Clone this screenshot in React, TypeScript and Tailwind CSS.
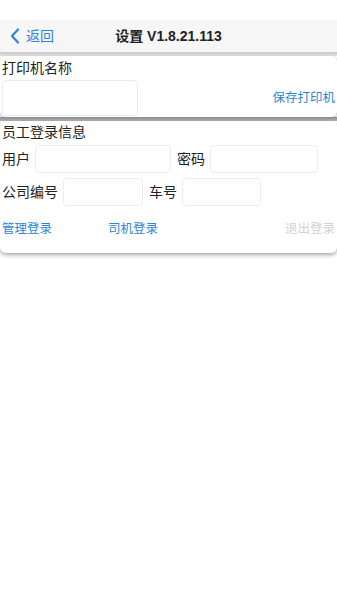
import React from "react";

function Field({ w }: { readonly w: string }) {
  return <div className={`${w} h-[28px] rounded-[4px] border border-[#ececec] bg-white`}></div>;
}

export default function App() {
  return (
    <div
      className="w-[337px] h-[600px] bg-white text-[#222] overflow-hidden"
      style={{ fontFamily: '"Liberation Sans", "Noto Sans CJK SC", sans-serif' }}
    >
      {/* STATUS BAR SPACE */}
      <div className="h-[20px] bg-white"></div>
      {/* HEADER */}
      <div className="relative h-[32px] bg-[#f6f6f6] flex items-center">
        <div className="flex items-center gap-[6px] pl-[10px] text-[#2d84d8] text-[14px]">
          <svg width="10" height="16" viewBox="0 0 10 16" fill="none">
            <path d="M8 1.5 L2 8 L8 14.5" stroke="#2d84d8" strokeWidth="2.2" strokeLinecap="round" strokeLinejoin="round" />
          </svg>
          <span>返回</span>
        </div>
        <div className="absolute left-0 right-0 text-center text-[14px] font-bold text-[#222] pointer-events-none">
          设置 V1.8.21.113
        </div>
      </div>
      <div className="h-[4px] bg-gradient-to-b from-[#c8c8c8] to-[#e4e4e4]"></div>

      {/* PRINTER CARD */}
      <div className="bg-white rounded-[6px] shadow-[0_1px_3px_rgba(0,0,0,0.35)] pt-[2px] pb-[1px]">
        <div className="px-[2px] text-[14px] leading-[20px]">打印机名称</div>
        <div className="flex items-center justify-between pl-[2px] pr-[2px] mt-[2px]">
          <div className="w-[136px] h-[36px] rounded-[4px] border border-[#ececec]"></div>
          <span className="text-[12.5px] text-[#2d84d8]">保存打印机</span>
        </div>
      </div>
      <div className="h-[4px] bg-gradient-to-b from-[#8a8a8a] to-[#b5b5b5]"></div>

      {/* LOGIN CARD */}
      <div className="bg-white rounded-[6px] shadow-[0_2px_4px_rgba(0,0,0,0.35)] pt-[1px] pb-[14px]">
        <div className="px-[2px] text-[14px] leading-[20px]">员工登录信息</div>
        <div className="flex items-center px-[2px] mt-[3px] text-[14px]">
          <span className="w-[33px]">用户</span>
          <Field w="w-[136px]" />
          <span className="ml-[6px] w-[33px]">密码</span>
          <Field w="w-[108px]" />
        </div>
        <div className="flex items-center px-[2px] mt-[5px] text-[14px]">
          <span className="w-[61px]">公司编号</span>
          <Field w="w-[80px]" />
          <span className="ml-[6px] w-[33px]">车号</span>
          <Field w="w-[79px]" />
        </div>
        <div className="flex items-center px-[2px] mt-[14px] text-[12.5px]">
          <span className="text-[#2d84d8]">管理登录</span>
          <span className="ml-[56px] text-[#2d84d8]">司机登录</span>
          <span className="ml-auto text-[#d2d2d2]">退出登录</span>
        </div>
      </div>
    </div>
  );
}
